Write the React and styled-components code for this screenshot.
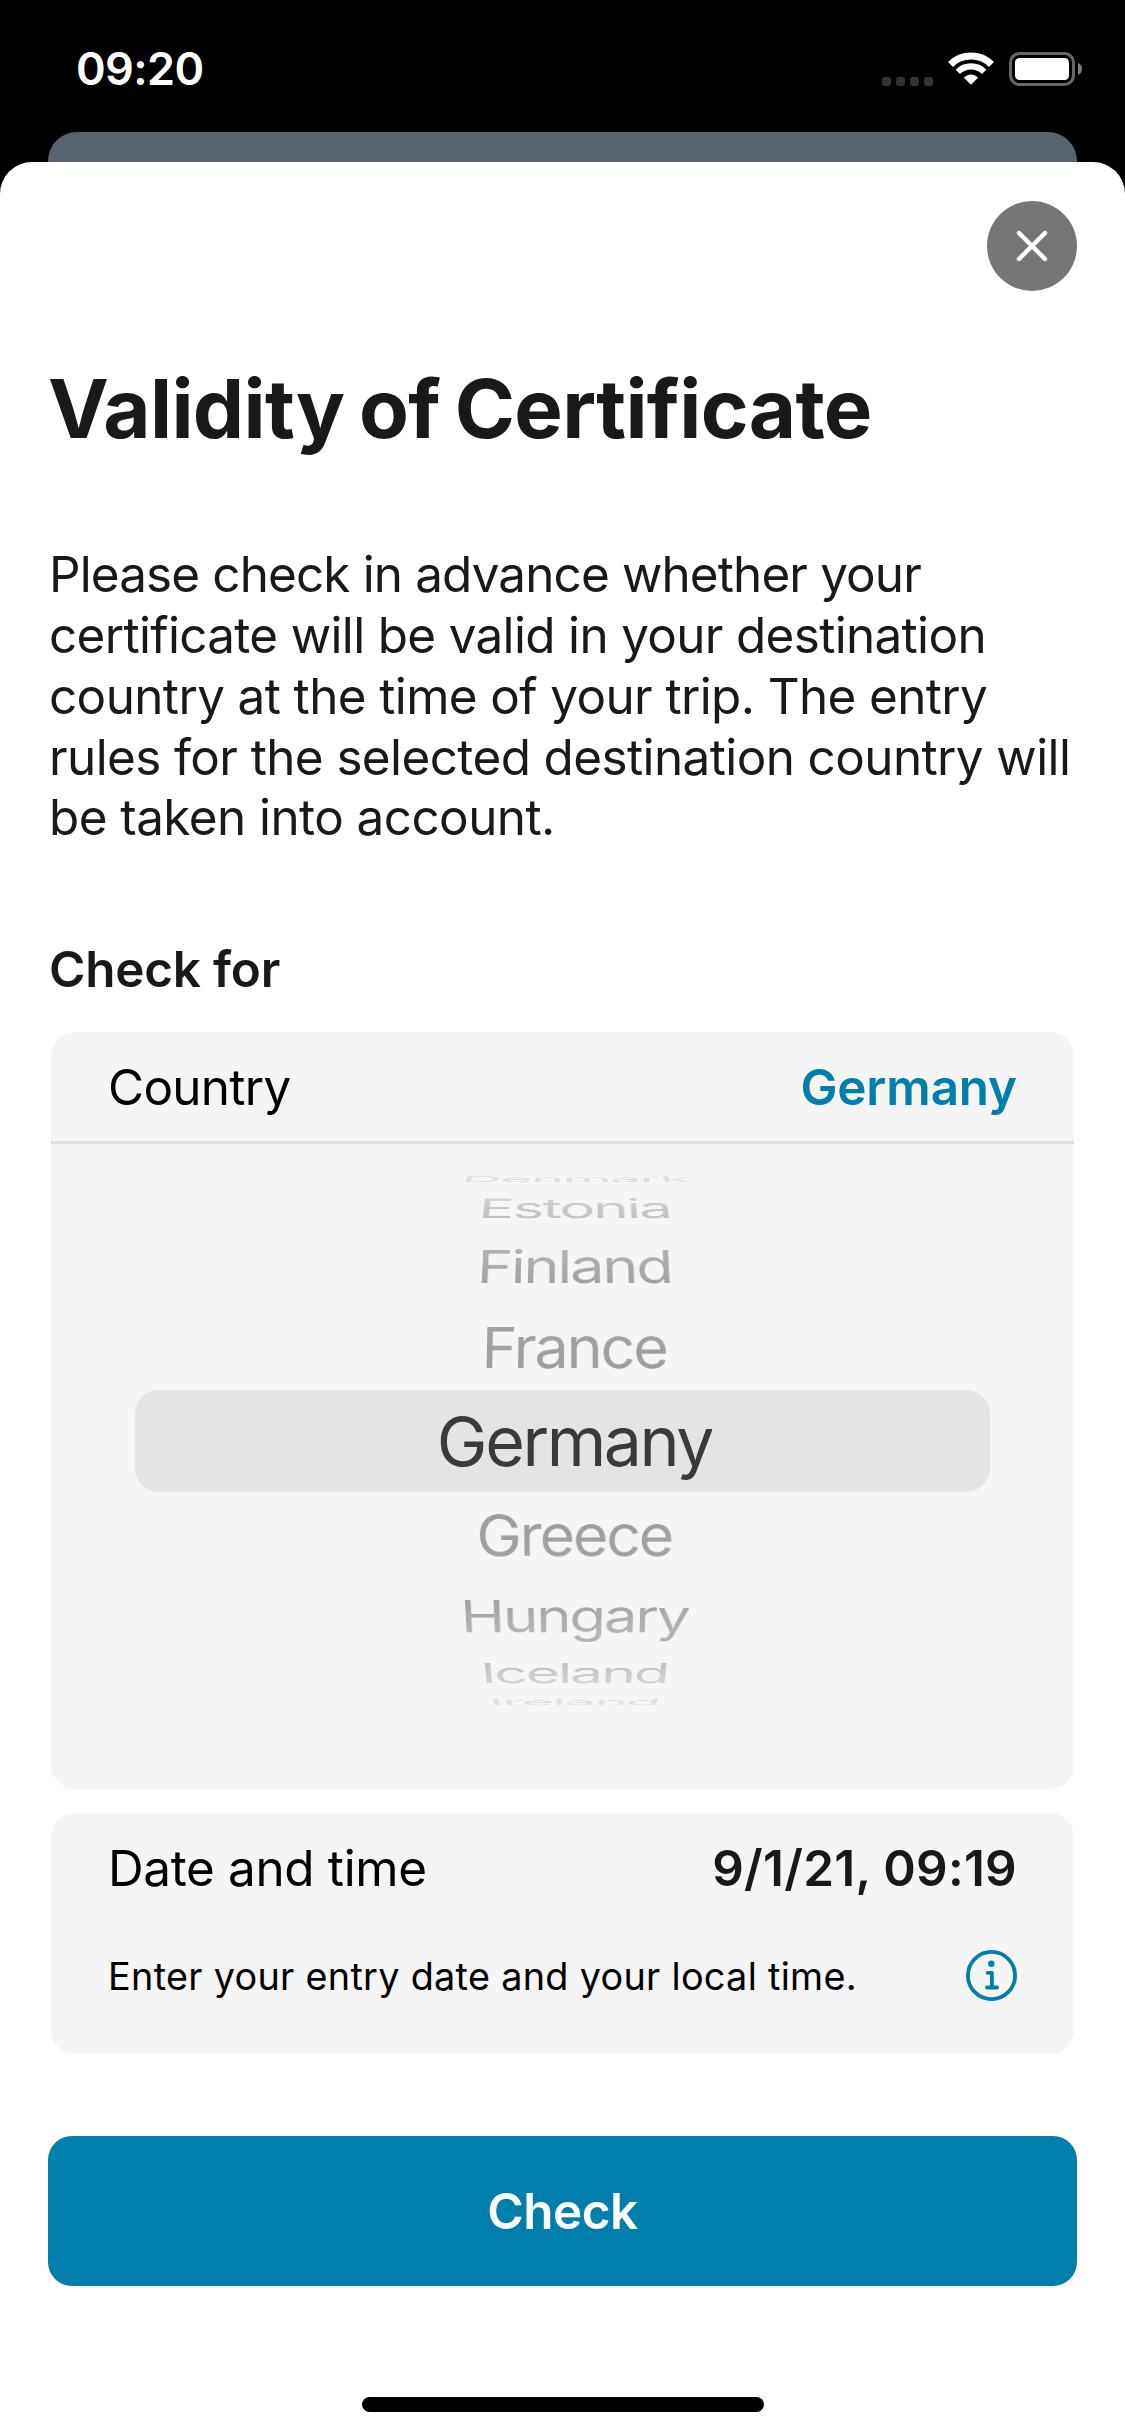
import React from "react";
import styled, { createGlobalStyle } from "styled-components";

const GlobalStyle = createGlobalStyle`
  *, *::before, *::after { box-sizing: border-box; }
  body {
    margin: 0;
    background: #000;
    font-family: Inter, "Liberation Sans", sans-serif;
    color: #18191a;
  }
`;

const Screen = styled.div`
  display: flex;
  flex-direction: column;
  width: 1125px;
  height: 2436px;
  overflow: hidden;
  background: #000;
`;

const StatusBar = styled.header`
  display: flex;
  flex: none;
  align-items: center;
  justify-content: space-between;
  height: 132px;
  padding: 6px 43px 0 76px;
`;

const Clock = styled.time`
  font-size: 45px;
  font-weight: 600;
  letter-spacing: -0.6px;
  line-height: 56px;
  color: #fff;
`;

const StatusIcons = styled.div`
  display: flex;
  align-items: center;
`;

const SignalDots = styled.div`
  display: flex;
  align-self: flex-end;
  gap: 5px;
  margin-right: 15px;
`;

const SignalDot = styled.i`
  width: 9px;
  height: 9px;
  border-radius: 3px;
  background: #333;
`;

const WifiIcon = styled.svg`
  width: 46px;
  height: 34px;
  margin-right: 15px;
`;

const BatteryIcon = styled.svg`
  width: 73px;
  height: 34px;
`;

const BackSheet = styled.div`
  flex: none;
  height: 30px;
  margin: 0 48px;
  border-radius: 29px 29px 0 0;
  background: #576470;
`;

const Sheet = styled.main`
  display: flex;
  flex: 1;
  flex-direction: column;
  padding: 39px 48px 24px;
  border-radius: 32px 32px 0 0;
  background: #fff;
`;

const CloseButton = styled.button`
  display: flex;
  align-items: center;
  align-self: flex-end;
  justify-content: center;
  width: 90px;
  height: 90px;
  padding: 0;
  border: 0;
  border-radius: 50%;
  background: #757678;
`;

const Title = styled.h1`
  margin: 69px 0 0;
  font-size: 81.5px;
  font-weight: 700;
  letter-spacing: -0.67px;
  word-spacing: -4px;
  line-height: 97px;
  white-space: nowrap;
`;

const Intro = styled.p`
  display: flex;
  flex-direction: column;
  height: 304px;
  margin: 87px 0 0;
  padding-left: 1px;
  font-size: 49.4px;
  line-height: 60.86px;
  white-space: nowrap;
`;

const IntroLine = styled.span`
  letter-spacing: ${(p) => p.$tracking}px;
`;

const SectionTitle = styled.h2`
  margin: 91px 0 33px;
  padding-left: 1px;
  font-size: 49.4px;
  font-weight: 600;
  letter-spacing: -0.2px;
  line-height: 60px;
`;

const Card = styled.section`
  height: ${(p) => p.$height}px;
  margin: 0 3px ${(p) => p.$gap}px;
  border-radius: 24px;
  background: #f5f5f5;
`;

const CardRow = styled.div`
  display: flex;
  align-items: center;
  justify-content: space-between;
  height: ${(p) => p.$height}px;
  padding: 0 57px;
`;

const Divider = styled.hr`
  height: 3px;
  margin: 0;
  border: 0;
  background: #dfdfdf;
`;

const Label = styled.span`
  font-size: 49.4px;
  letter-spacing: ${(p) => p.$tracking}px;
  line-height: 60px;
  color: #000;
`;

const Value = styled.span`
  font-size: 49.4px;
  font-weight: 600;
  letter-spacing: ${(p) => p.$tracking}px;
  line-height: 60px;
  color: ${(p) => (p.$accent ? "#007fad" : "#18191a")};
`;

const Hint = styled.span`
  font-size: 37.8px;
  letter-spacing: 0.29px;
  line-height: 48px;
  color: #000;
`;

const InfoIcon = styled.svg`
  width: 51px;
  height: 51px;
`;

const Wheel = styled.div`
  display: flex;
  flex-direction: column;
  padding: 25px 84px 0;
`;

const WheelSlot = styled.div`
  display: flex;
  align-items: center;
  justify-content: center;
  height: ${(p) => p.$height}px;
  padding-left: 24px;
  border-radius: 24px;
  background: ${(p) => (p.$selected ? "#e4e4e4" : "transparent")};
`;

const WheelText = styled.span`
  flex: none;
  font-size: 68px;
  font-weight: 430;
  letter-spacing: -2.4px;
  line-height: 84px;
  color: transparent;
  background: linear-gradient(${(p) => p.$from} 22%, ${(p) => p.$to} 78%);
  background-clip: text;
  -webkit-background-clip: text;
  transform: ${(p) =>
    p.$angle === 0
      ? "none"
      : `scale(${p.$scale}) perspective(2000px) rotateX(${p.$angle}deg)`};
`;

const PrimaryButton = styled.button`
  flex: none;
  height: 150px;
  padding: 0;
  border: 0;
  border-radius: 24px;
  font-family: inherit;
  font-size: 49.4px;
  font-weight: 600;
  letter-spacing: -0.45px;
  line-height: 60px;
  color: #fff;
  background: #007fad;
`;

const HomeIndicator = styled.div`
  align-self: center;
  width: 402px;
  height: 15px;
  margin-top: auto;
  border-radius: 8px;
  background: #000;
`;

const introLines = [
  ["Please check in advance whether your", -0.85],
  ["certificate will be valid in your destination", -0.65],
  ["country at the time of your trip. The entry", -0.6],
  ["rules for the selected destination country will", -0.58],
  ["be taken into account.", -0.55],
];

const countries = [
  { name: "Denmark", height: 20, scale: 0.829, angle: 81.3, from: "#e2e2e2", to: "#dadada" },
  { name: "Estonia", height: 38, scale: 0.883, angle: 63.2, from: "#d0d0d0", to: "#c1c1c1" },
  { name: "Finland", height: 77, scale: 0.897, angle: 41.9, from: "#b2b2b2", to: "#a2a2a2" },
  { name: "France", height: 86, scale: 0.897, angle: 21.7, from: "#a2a2a2", to: "#9d9d9d" },
  { name: "Germany", height: 102, scale: 1, angle: 0, from: "#3a3a3a", to: "#3a3a3a" },
  { name: "Greece", height: 86, scale: 0.896, angle: -21.7, from: "#9d9d9d", to: "#a2a2a2" },
  { name: "Hungary", height: 76, scale: 0.88, angle: -41.4, from: "#a2a2a2", to: "#b4b4b4" },
  { name: "Iceland", height: 38, scale: 0.866, angle: -61.7, from: "#c1c1c1", to: "#d2d2d2" },
  { name: "Ireland", height: 20, scale: 0.844, angle: -81.5, from: "#dadada", to: "#e2e2e2" },
];

export default function App() {
  return (
    <Screen>
      <GlobalStyle />
      <StatusBar>
        <Clock>09:20</Clock>
        <StatusIcons>
          <SignalDots>
            <SignalDot />
            <SignalDot />
            <SignalDot />
            <SignalDot />
          </SignalDots>
          <WifiIcon viewBox="0 0 46 34" fill="none" stroke="#fff">
            <path d="M2.5 12.5A29 29 0 0 1 43.5 12.5" strokeWidth="7.2" />
            <path d="M9.85 19.85A18.6 18.6 0 0 1 36.15 19.85" strokeWidth="6.2" />
            <path
              d="M23 32.3L16.4 25.7A9.4 9.4 0 0 1 29.6 25.7Z"
              fill="#fff"
              strokeWidth="1"
              strokeLinejoin="round"
            />
          </WifiIcon>
          <BatteryIcon viewBox="0 0 73 34">
            <rect x="1.5" y="1.5" width="63" height="31" rx="9" fill="none" stroke="#666" strokeWidth="3" />
            <rect x="6" y="6" width="54" height="22" rx="4.5" fill="#fff" />
            <path d="M69 11C71.5 12 73 14.3 73 17C73 19.7 71.5 22 69 23Z" fill="#808080" />
          </BatteryIcon>
        </StatusIcons>
      </StatusBar>
      <BackSheet />
      <Sheet>
        <CloseButton aria-label="Close">
          <svg width="32" height="32" viewBox="0 0 32 32">
            <path d="M3 3L29 29M29 3L3 29" stroke="#fff" strokeWidth="4.4" strokeLinecap="round" />
          </svg>
        </CloseButton>
        <Title>Validity of Certificate</Title>
        <Intro>
          {introLines.map(([text, tracking]) => (
            <IntroLine key={text} $tracking={tracking}>
              {text}
            </IntroLine>
          ))}
        </Intro>
        <SectionTitle>Check for</SectionTitle>
        <Card $height={757} $gap={24}>
          <CardRow $height={109}>
            <Label $tracking={-0.7}>Country</Label>
            <Value $accent $tracking={-0.15}>Germany</Value>
          </CardRow>
          <Divider />
          <Wheel>
            {countries.map((c) => (
              <WheelSlot key={c.name} $height={c.height} $selected={c.angle === 0}>
                <WheelText $scale={c.scale} $angle={c.angle} $from={c.from} $to={c.to}>
                  {c.name}
                </WheelText>
              </WheelSlot>
            ))}
          </Wheel>
        </Card>
        <Card $height={241} $gap={82}>
          <CardRow $height={110}>
            <Label $tracking={-0.33}>Date and time</Label>
            <Value $tracking={0.28}>9/1/21, 09:19</Value>
          </CardRow>
          <CardRow $height={105}>
            <Hint>Enter your entry date and your local time.</Hint>
            <InfoIcon viewBox="0 0 51 51" fill="none" stroke="#007fad" strokeLinecap="round" strokeLinejoin="round">
              <circle cx="25.5" cy="25.5" r="23.6" strokeWidth="3.8" />
              <circle cx="25.3" cy="13.7" r="3.2" fill="#007fad" stroke="none" />
              <path d="M21.7 22.8H25.9V37.4M21 37.5H31.2" strokeWidth="3.8" />
            </InfoIcon>
          </CardRow>
        </Card>
        <PrimaryButton>Check</PrimaryButton>
        <HomeIndicator />
      </Sheet>
    </Screen>
  );
}
